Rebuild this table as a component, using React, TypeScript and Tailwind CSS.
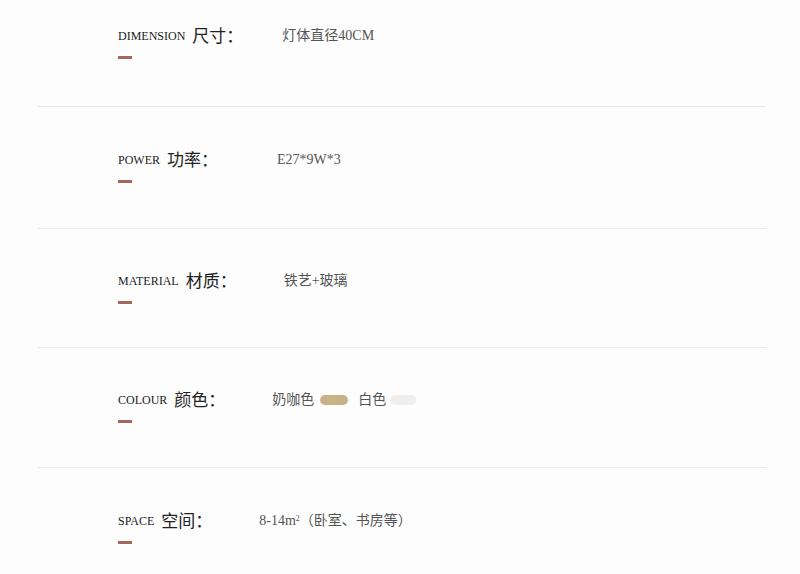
const specs = [
  { en: "DIMENSION", zh: "尺寸：", gap: "ml-[39px]", pad: "pt-[26px] pb-[47px]", value: "灯体直径40CM" },
  { en: "POWER", zh: "功率：", gap: "ml-[59px]", pad: "pt-[43px] pb-[45px]", value: "E27*9W*3" },
  { en: "MATERIAL", zh: "材质：", gap: "ml-[47px]", pad: "pt-[42px] pb-[43px]", value: "铁艺+玻璃" },
  { en: "COLOUR", zh: "颜色：", gap: "ml-[47px]", pad: "pt-[42px] pb-[44px]", value: "colour" },
  { en: "SPACE", zh: "空间：", gap: "ml-[47px]", pad: "pt-[43px] pb-[44px]", value: "space" },
];

const serif = "font-['Liberation_Serif','Noto_Sans_CJK_SC',serif]";

function Value({ value }: { value: string }) {
  if (value === "colour") {
    return (
      <span className="flex items-center">
        <span>奶咖色</span>
        <span className="ml-[6px] h-[10px] w-[28px] rounded-full bg-[#c9b187]" />
        <span className="ml-[10px]">白色</span>
        <span className="ml-[4px] h-[10px] w-[26px] rounded-full bg-[#efefef]" />
      </span>
    );
  }
  if (value === "space") {
    return (
      <span>
        8-14m<sup className="text-[8px]">2</sup>（卧室、书房等）
      </span>
    );
  }
  return <span>{value}</span>;
}

export default function App() {
  return (
    <div className={`h-[574px] w-[800px] overflow-hidden bg-[#fdfdfd] ${serif}`}>
      <div className="mx-[38px] w-[728px]">
        {specs.map((s, i) => (
          <div key={s.en}>
            {i > 0 && <div className="h-px bg-[#ebebeb]" />}
            <div className={`pl-[80px] ${s.pad}`}>
              <div className="flex h-[20px] items-center">
                <span className="text-[12px] text-[#222] leading-none">{s.en}</span>
                <span className="ml-[7px] text-[17px] text-[#222] leading-none">{s.zh}</span>
                <span className={`${s.gap} text-[14px] text-[#555] leading-none`}>
                  <Value value={s.value} />
                </span>
              </div>
              <div className="mt-[10px] h-[3px] w-[14px] bg-[#a5675b]" />
            </div>
          </div>
        ))}
      </div>
    </div>
  );
}
